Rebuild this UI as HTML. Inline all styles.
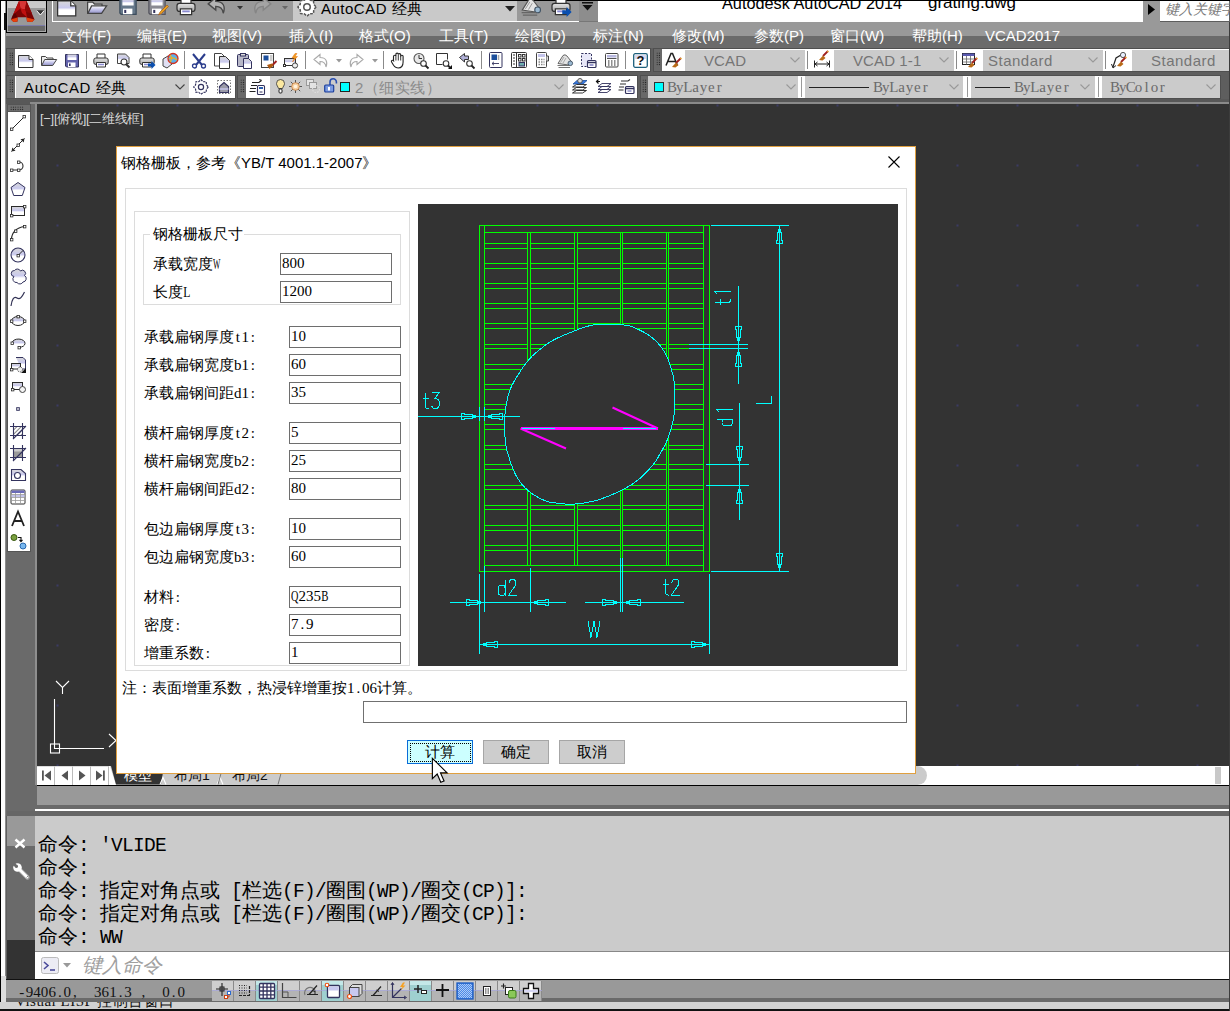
<!DOCTYPE html>
<html lang="zh">
<head>
<meta charset="utf-8">
<title>AutoCAD</title>
<style>
*{box-sizing:border-box;margin:0;padding:0}
html,body{width:1230px;height:1011px;overflow:hidden;background:#333}
body{position:relative;font-family:"Liberation Sans",sans-serif;font-size:15px;color:#000}
.a{position:absolute}
.t{position:absolute;white-space:nowrap;line-height:1}
.mono{font-family:"Liberation Mono",monospace}
.serif{font-family:"Liberation Serif",serif}
svg{position:absolute;overflow:visible}
/* ---------- frame ---------- */
#frame{left:0;top:0;width:1230px;height:1011px;background:#5e5e5e}
#ledge0{left:0;top:0;width:1px;height:1011px;background:#000}
#ledge1{left:1px;top:1px;width:4px;height:1002px;background:#fdfdfd}
#ledge2{left:5px;top:1px;width:1px;height:1002px;background:#8c8c8c}
#tedge{left:0;top:0;width:1230px;height:1px;background:#000}
#redge{left:1229px;top:22px;width:1px;height:989px;background:#3c3c3c}
/* ---------- title ---------- */
#appbtn{left:6px;top:0;width:41px;height:33px;border:1px solid #000;background:linear-gradient(#c9c9c9 0,#c9c9c9 7px,#999 7px,#999 24px,#7c7ca8 24px,#7c7ca8 25px,#6a6a6a 25px)}
#qatgap{left:47px;top:1px;width:5px;height:21px;background:#999}
#qat{left:52px;top:1px;width:527px;height:21px;background:#999;border-left:1px solid #fff;border-bottom:1px solid #fff}
#qatcombo{left:293px;top:1px;width:224px;height:20px;background:#c9c9c9}
#qatdrop{left:579px;top:1px;width:19px;height:21px;background:#8d8d8d;border-bottom:1px solid #777}
#titlebar{left:598px;top:1px;width:545px;height:21px;background:#fff}
#srchbtn{left:1143px;top:1px;width:17px;height:21px;background:#999}
#srch{left:1160px;top:1px;width:69px;height:20px;background:#fff}
/* ---------- menu ---------- */
#menubar{left:6px;top:22px;width:1223px;height:26px;background:linear-gradient(#999 0,#999 14px,#6b6b6b 14px,#6b6b6b 100%)}
.mi{position:absolute;top:27px;color:#fff;font-size:15px;line-height:17px;white-space:nowrap}
/* ---------- toolbars ---------- */
.tb{position:absolute;background:#696969;border:1px solid #4f4f4f}
.tbw{position:absolute;background:#fff}
.cmb{position:absolute;background:#cbcbcb}
.grip{position:absolute;width:4.6px;background-image:radial-gradient(circle,#1a1a1a 0.5px,transparent 0.8px);background-size:2.3px 2.3px}
</style>
</head>
<body>
<div id="frame" class="a"></div>
<div id="tedge" class="a"></div>
<div id="ledge0" class="a"></div>
<div id="ledge1" class="a"></div>
<div id="ledge2" class="a"></div>

<!-- TITLE ROW -->
<div id="qatgap" class="a"></div>
<div id="qat" class="a"></div>
<div id="qatcombo" class="a"></div>
<div id="qatdrop" class="a"></div>
<div id="titlebar" class="a"></div>
<div id="srchbtn" class="a"></div>
<div id="srch" class="a"></div>
<!-- MENU -->
<div id="menubar" class="a"></div>
<div id="appbtn" class="a"></div>
<div class="mi" style="left:62px">文件(F)</div>
<div class="mi" style="left:137px">编辑(E)</div>
<div class="mi" style="left:212px">视图(V)</div>
<div class="mi" style="left:289px">插入(I)</div>
<div class="mi" style="left:359px">格式(O)</div>
<div class="mi" style="left:439px">工具(T)</div>
<div class="mi" style="left:515px">绘图(D)</div>
<div class="mi" style="left:593px">标注(N)</div>
<div class="mi" style="left:672px">修改(M)</div>
<div class="mi" style="left:754px">参数(P)</div>
<div class="mi" style="left:830px">窗口(W)</div>
<div class="mi" style="left:912px">帮助(H)</div>
<div class="mi" style="left:985px">VCAD2017</div>
<div class="t" id="ttl" style="left:722px;top:-5.500px;font-size:16.300px;line-height:17px">Autodesk AutoCAD 2014</div>
<div class="t" id="ttl2" style="left:928px;top:-6px;font-size:17px;line-height:17px">grating.dwg</div>
<div class="t" style="left:321px;top:0px;font-size:15px;line-height:17px;letter-spacing:.5px" id="qattxt">AutoCAD <span style="letter-spacing:0">经典</span></div>
<div class="t" style="left:1165px;top:2px;font-size:14px;line-height:14px;font-style:italic;color:#7a7a7a" id="srchtxt">键入关键字</div>
<svg style="left:1147px;top:4px" width="9" height="11"><path d="M1 0 L8 5.5 L1 11Z" fill="#000"/></svg>
<svg style="left:505px;top:6px" width="10" height="6"><path d="M0 0H10L5 5.5Z" fill="#222"/></svg>
<svg style="left:582px;top:2px" width="12" height="9"><path d="M0 0H11V1.6H0Z M0.5 3H10.5L5.5 8.5Z" fill="#111"/></svg>
<svg style="left:6px;top:0" width="41" height="33" viewBox="0 0 41 33">
<rect x="1.500" y="1.500" width="38" height="30" fill="none" stroke="#c4c4c4" stroke-width="1" opacity=".7"/>
<path d="M13 1L20.500 1L28.500 19.500L26 22L21 21.500L20.500 17.200L11.500 17.200L11.500 21.500L7.500 22L5 19.500Z" fill="#7a0404"/>
<path d="M13 1L20.500 1L19 9.500L14.500 8.500Z" fill="#d63636"/>
<path d="M13 1L14.500 8.500L9 13L7 15Z" fill="#b80d0d"/>
<path d="M20.500 1L26 13.500L20 12L19 9.500Z" fill="#8e0606"/>
<path d="M14.500 8.500L19 9.500L20 12L21 17.200L16 13Z" fill="#c01010"/>
<path d="M5 19.500L7 15L9 13L11.500 17.200L6 18Z" fill="#5a0202"/>
<path d="M5 19.500L11.500 17.500L11.500 21.500L7.500 22Z" fill="#e8420c"/>
<path d="M20.500 17.500L28.500 19.500L26 22L21 21.500Z" fill="#e8420c"/>
<path d="M30.800 10.200H38L34.400 14.400Z" fill="#333"/><path d="M30.800 10.800L34.400 15L38 10.800" fill="none" stroke="#fff" stroke-width=".9"/>
</svg>
<div class="a" style="left:4px;top:13px;width:1.500px;height:17px;background:#111"></div>
<!--MENUITEMS-->
<svg width="0" height="0" style="left:0;top:0"><defs>
<linearGradient id="gp" x1="0" y1="0" x2="0" y2="1"><stop offset="0" stop-color="#d8d8d8"/><stop offset=".45" stop-color="#c9c9ee"/><stop offset=".6" stop-color="#fff"/><stop offset="1" stop-color="#fff"/></linearGradient>
<linearGradient id="gf" x1="0" y1="0" x2="0" y2="1"><stop offset="0" stop-color="#fff"/><stop offset=".5" stop-color="#c4c4ea"/><stop offset="1" stop-color="#8f8fc4"/></linearGradient>
<linearGradient id="gg" x1="0" y1="0" x2="0" y2="1"><stop offset="0" stop-color="#e4e4e4"/><stop offset="1" stop-color="#a8a8a8"/></linearGradient>
</defs></svg>
<div class="tb" style="left:6px;top:48px;width:645px;height:24px"></div>
<div class="tbw" style="left:15px;top:49px;width:635px;height:22px"></div>
<div class="grip" style="left:8.5px;top:52px;height:14px"></div>
<div class="tb" style="left:653px;top:48px;width:577px;height:24px"></div>
<div class="tbw" style="left:662px;top:49px;width:567px;height:22px"></div>
<div class="grip" style="left:655.5px;top:52px;height:14px"></div>
<div class="tb" style="left:6px;top:75px;width:230px;height:24px"></div>
<div class="tbw" style="left:189px;top:76px;width:46px;height:22px"></div>
<div class="cmb" style="left:15px;top:76px;width:174px;height:22px;border-left:1px solid #fff"></div>
<div class="grip" style="left:8.5px;top:79px;height:14px"></div>
<div class="tb" style="left:237px;top:75px;width:401px;height:24px"></div>
<div class="tbw" style="left:246px;top:76px;width:391px;height:22px"></div>
<div class="cmb" style="left:270px;top:76px;width:298px;height:22px"></div>
<div class="grip" style="left:240px;top:79px;height:14px"></div>
<div class="tb" style="left:640px;top:75px;width:581px;height:24px"></div>
<div class="tbw" style="left:648px;top:76px;width:572px;height:22px"></div>
<div class="grip" style="left:642px;top:79px;height:14px"></div>
<div class="cmb" style="left:648px;top:76px;width:150px;height:22px"></div>
<div class="cmb" style="left:805px;top:76px;width:158px;height:22px"></div>
<div class="cmb" style="left:971px;top:76px;width:124px;height:22px"></div>
<div class="cmb" style="left:1102px;top:76px;width:118px;height:22px"></div>
<div class="a" style="left:800.5px;top:77px;width:1.5px;height:20px;background:#9a9a9a"></div>
<div class="a" style="left:966.5px;top:77px;width:1.5px;height:20px;background:#9a9a9a"></div>
<div class="a" style="left:1097.5px;top:77px;width:1.5px;height:20px;background:#9a9a9a"></div>
<div class="cmb" style="left:685px;top:50px;width:120px;height:21px"></div>
<div class="cmb" style="left:834px;top:50px;width:120px;height:21px"></div>
<div class="cmb" style="left:983px;top:50px;width:120px;height:21px"></div>
<div class="cmb" style="left:1132px;top:50px;width:97px;height:21px"></div>
<div class="a" style="left:86px;top:51px;width:1px;height:18px;background:#8a8a8a"></div>
<div class="a" style="left:184px;top:51px;width:1px;height:18px;background:#8a8a8a"></div>
<div class="a" style="left:305px;top:51px;width:1px;height:18px;background:#8a8a8a"></div>
<div class="a" style="left:383px;top:51px;width:1px;height:18px;background:#8a8a8a"></div>
<div class="a" style="left:481px;top:51px;width:1px;height:18px;background:#8a8a8a"></div>
<div class="a" style="left:625px;top:51px;width:1px;height:18px;background:#8a8a8a"></div>
<div class="a" style="left:807px;top:51px;width:1px;height:18px;background:#8a8a8a"></div>
<div class="a" style="left:956px;top:51px;width:1px;height:18px;background:#8a8a8a"></div>
<div class="a" style="left:1105px;top:51px;width:1px;height:18px;background:#8a8a8a"></div>
<svg style="left:175px;top:84px" width="10" height="6" viewBox="0 0 10 6" ><path d="M0.5 0.5 L5 5 L9.5 0.5" fill="none" stroke="#444" stroke-width="1.1"/></svg>
<svg style="left:554px;top:84px" width="10" height="6" viewBox="0 0 10 6" ><path d="M0.5 0.5 L5 5 L9.5 0.5" fill="none" stroke="#999" stroke-width="1.1"/></svg>
<svg style="left:790px;top:57px" width="10" height="6" viewBox="0 0 10 6" ><path d="M0.5 0.5 L5 5 L9.5 0.5" fill="none" stroke="#999" stroke-width="1.1"/></svg>
<svg style="left:939px;top:57px" width="10" height="6" viewBox="0 0 10 6" ><path d="M0.5 0.5 L5 5 L9.5 0.5" fill="none" stroke="#999" stroke-width="1.1"/></svg>
<svg style="left:1088px;top:57px" width="10" height="6" viewBox="0 0 10 6" ><path d="M0.5 0.5 L5 5 L9.5 0.5" fill="none" stroke="#999" stroke-width="1.1"/></svg>
<svg style="left:786px;top:84px" width="10" height="6" viewBox="0 0 10 6" ><path d="M0.5 0.5 L5 5 L9.5 0.5" fill="none" stroke="#999" stroke-width="1.1"/></svg>
<svg style="left:949px;top:84px" width="10" height="6" viewBox="0 0 10 6" ><path d="M0.5 0.5 L5 5 L9.5 0.5" fill="none" stroke="#999" stroke-width="1.1"/></svg>
<svg style="left:1080px;top:84px" width="10" height="6" viewBox="0 0 10 6" ><path d="M0.5 0.5 L5 5 L9.5 0.5" fill="none" stroke="#999" stroke-width="1.1"/></svg>
<svg style="left:1206px;top:84px" width="10" height="6" viewBox="0 0 10 6" ><path d="M0.5 0.5 L5 5 L9.5 0.5" fill="none" stroke="#999" stroke-width="1.1"/></svg>
<div class="t" style="left:24px;top:79px;font-size:15px;line-height:17px;letter-spacing:.64px">AutoCAD <span style="letter-spacing:0">经典</span></div>
<div class="t" style="left:355px;top:79px;font-size:15px;line-height:17px;color:#8a8a8a;letter-spacing:.5px">2（细实线）</div>
<div class="t" style="left:704px;top:52px;font-size:15px;line-height:17px;color:#757575;letter-spacing:0.1px">VCAD</div>
<div class="t" style="left:853px;top:52px;font-size:15px;line-height:17px;color:#757575;letter-spacing:0.1px">VCAD 1-1</div>
<div class="t" style="left:988px;top:52px;font-size:15px;line-height:17px;color:#757575;letter-spacing:0.5px">Standard</div>
<div class="t" style="left:1151px;top:52px;font-size:15px;line-height:17px;color:#757575;letter-spacing:0.5px">Standard</div>
<div class="t serif" style="left:668px;top:79px;font-size:15px;line-height:16px;color:#6a6a6a"><i style="font-style:normal;display:inline-flex;justify-content:center;width:7.900px">B</i><i style="font-style:normal;display:inline-flex;justify-content:center;width:7.900px">y</i><i style="font-style:normal;display:inline-flex;justify-content:center;width:7.900px">L</i><i style="font-style:normal;display:inline-flex;justify-content:center;width:7.900px">a</i><i style="font-style:normal;display:inline-flex;justify-content:center;width:7.900px">y</i><i style="font-style:normal;display:inline-flex;justify-content:center;width:7.900px">e</i><i style="font-style:normal;display:inline-flex;justify-content:center;width:7.900px">r</i></div>
<div class="t serif" style="left:874px;top:79px;font-size:15px;line-height:16px;color:#6a6a6a"><i style="font-style:normal;display:inline-flex;justify-content:center;width:7.900px">B</i><i style="font-style:normal;display:inline-flex;justify-content:center;width:7.900px">y</i><i style="font-style:normal;display:inline-flex;justify-content:center;width:7.900px">L</i><i style="font-style:normal;display:inline-flex;justify-content:center;width:7.900px">a</i><i style="font-style:normal;display:inline-flex;justify-content:center;width:7.900px">y</i><i style="font-style:normal;display:inline-flex;justify-content:center;width:7.900px">e</i><i style="font-style:normal;display:inline-flex;justify-content:center;width:7.900px">r</i></div>
<div class="t serif" style="left:1015px;top:79px;font-size:15px;line-height:16px;color:#6a6a6a"><i style="font-style:normal;display:inline-flex;justify-content:center;width:7.900px">B</i><i style="font-style:normal;display:inline-flex;justify-content:center;width:7.900px">y</i><i style="font-style:normal;display:inline-flex;justify-content:center;width:7.900px">L</i><i style="font-style:normal;display:inline-flex;justify-content:center;width:7.900px">a</i><i style="font-style:normal;display:inline-flex;justify-content:center;width:7.900px">y</i><i style="font-style:normal;display:inline-flex;justify-content:center;width:7.900px">e</i><i style="font-style:normal;display:inline-flex;justify-content:center;width:7.900px">r</i></div>
<div class="t serif" style="left:1111px;top:79px;font-size:15px;line-height:16px;color:#6a6a6a"><i style="font-style:normal;display:inline-flex;justify-content:center;width:7.900px">B</i><i style="font-style:normal;display:inline-flex;justify-content:center;width:7.900px">y</i><i style="font-style:normal;display:inline-flex;justify-content:center;width:7.900px">C</i><i style="font-style:normal;display:inline-flex;justify-content:center;width:7.900px">o</i><i style="font-style:normal;display:inline-flex;justify-content:center;width:7.900px">l</i><i style="font-style:normal;display:inline-flex;justify-content:center;width:7.900px">o</i><i style="font-style:normal;display:inline-flex;justify-content:center;width:7.900px">r</i></div>
<div class="a" style="left:809px;top:87px;width:60px;height:1.3px;background:#222"></div>
<div class="a" style="left:975px;top:87px;width:35px;height:1.3px;background:#222"></div>
<div class="a" style="left:654px;top:82px;width:10px;height:10px;background:#00ffff;border:1px solid #333"></div>
<div class="a" style="left:340px;top:82px;width:10px;height:10px;background:#00ffff;border:1px solid #222"></div>
<svg style="left:18px;top:54px" width="16" height="14" viewBox="0 0 16 14" ><path d="M0.5 1.5h10.5l4 4v8h-14.5z" fill="url(#gp)" stroke="#333" stroke-width="1"/><path d="M11 1.5v4h4" fill="#fff" stroke="#333" stroke-width="1"/></svg>
<svg style="left:41px;top:54px" width="16" height="14" viewBox="0 0 16 14" ><path d="M0.5 11.5v-9h4l1.5 1.5h6v2" fill="#eee" stroke="#444"/><path d="M0.7 11.5l3-6h12l-4 6z" fill="url(#gf)" stroke="#444"/></svg>
<svg style="left:64px;top:54px" width="16" height="14" viewBox="0 0 16 14" ><path d="M1.5 0.5h13v12.5h-12l-1-1z" fill="#6363ac" stroke="#33335e"/><rect x="3.5" y="0.5" width="9" height="5.5" fill="url(#gp)"/><rect x="4" y="8.5" width="7.5" height="4.5" fill="#fff"/><rect x="5" y="9.5" width="1.6" height="2.5" fill="#33335e"/></svg>
<svg style="left:93px;top:53px" width="17" height="16" viewBox="0 0 17 16" ><path d="M4 5V1h8v4" fill="#fff" stroke="#333"/><rect x="0.8" y="5" width="14.4" height="6.5" rx="2" fill="url(#gg)" stroke="#333"/><path d="M3.5 9.5h9v4.5h-9z" fill="#fff" stroke="#333"/><path d="M5 11.5h6" stroke="#8a8ad0" stroke-width="1.5"/></svg>
<svg style="left:116px;top:53px" width="16" height="16" viewBox="0 0 16 16" ><path d="M1.5 1h8l3.5 3.5v6h-11.5z" fill="url(#gp)" stroke="#444"/><circle cx="8" cy="9" r="3" fill="#fff" stroke="#333" stroke-width="1.2"/><path d="M10.2 11.2l3.3 3.3" stroke="#333" stroke-width="2"/></svg>
<svg style="left:139px;top:53px" width="17" height="16" viewBox="0 0 17 16" ><path d="M4 5V1h8v4" fill="#fff" stroke="#333"/><rect x="0.8" y="5" width="14.4" height="6.5" rx="2" fill="url(#gg)" stroke="#333"/><path d="M3.5 9.5h9v4.5h-9z" fill="#fff" stroke="#333"/><path d="M5 11.5h6" stroke="#8a8ad0" stroke-width="1.5"/><path d="M9 10.5h3.5v-2.5l4 4-4 4v-2.5h-3.5z" fill="#0a4fb0"/></svg>
<svg style="left:162px;top:53px" width="17" height="16" viewBox="0 0 17 16" ><path d="M1 6l5-3 4 1v7l-5 4-4-2z" fill="#e0e0f4" stroke="#444"/><circle cx="11" cy="5.5" r="5" fill="#5db0e8" stroke="#d03020" stroke-width="1.3"/><path d="M8 2c2 2 2 5 0 7M7 6c3-2 6-1 8 1" stroke="#f0b020" stroke-width="1.2" fill="none"/></svg>
<svg style="left:191px;top:53px" width="16" height="16" viewBox="0 0 16 16" ><path d="M2 1l9 11M14 1l-9 11" stroke="#2a3c8c" stroke-width="2"/><circle cx="3.5" cy="13" r="2" fill="#fff" stroke="#2a3c8c" stroke-width="1.3"/><circle cx="12.5" cy="13" r="2" fill="#fff" stroke="#2a3c8c" stroke-width="1.3"/></svg>
<svg style="left:214px;top:53px" width="16" height="16" viewBox="0 0 16 16" ><path d="M0.5 0.5h7l2.5 2.5v10h-9.5z" fill="#fff" stroke="#444"/><path d="M5.5 3.5h6l4 4v8h-10z" fill="url(#gp)" stroke="#333"/></svg>
<svg style="left:237px;top:53px" width="16" height="16" viewBox="0 0 16 16" ><rect x="0.5" y="1.5" width="11" height="12" rx="1" fill="#b8b8c8" stroke="#33335e"/><rect x="3.5" y="0.5" width="5" height="2.5" fill="#ddd" stroke="#33335e"/><path d="M6.5 5.5h5l3 3v7h-8z" fill="url(#gp)" stroke="#33335e"/></svg>
<svg style="left:261px;top:53px" width="17" height="16" viewBox="0 0 17 16" ><rect x="0.5" y="0.5" width="12" height="14" fill="#fff" stroke="#444"/><rect x="2.5" y="2.5" width="5" height="5" fill="#1c4f9c"/><path d="M9 3h2.5M9 5h2.5M9 7h2.5" stroke="#999"/><path d="M15.5 8l-5 5" stroke="#a02020" stroke-width="2"/><path d="M6 12l5-1.5 1.5 2-4 3.5z" fill="#b05a10"/></svg>
<svg style="left:283px;top:53px" width="17" height="16" viewBox="0 0 17 16" ><rect x="1.5" y="5.5" width="11" height="7" fill="url(#gp)" stroke="#333"/><circle cx="12" cy="12.5" r="2.6" fill="#eee" stroke="#444"/><rect x="0.5" y="11.5" width="2" height="2" fill="#fff" stroke="#333"/><path d="M12 0.5l-3 4.5h2.5l-2 4 5-5.5h-2.5l2-3z" fill="#f7a020" stroke="#e07010" stroke-width=".5"/></svg>
<svg style="left:313px;top:54px" width="16" height="14" viewBox="0 0 16 14" ><path d="M1 5.5l6-5v3c6 0 8 4 6 9.5c-.5-4-3-5.5-6-5.5v3z" fill="#fff" stroke="#aaa" stroke-width="1.1"/></svg>
<svg style="left:336px;top:59px" width="6" height="4" viewBox="0 0 6 4" ><path d="M0 0h6l-3 3.5z" fill="#999"/></svg>
<svg style="left:348px;top:54px" width="16" height="14" viewBox="0 0 16 14" ><path d="M15 5.5l-6-5v3c-6 0-8 4-6 9.5c.5-4 3-5.5 6-5.5v3z" fill="#fff" stroke="#aaa" stroke-width="1.1"/></svg>
<svg style="left:372px;top:59px" width="6" height="4" viewBox="0 0 6 4" ><path d="M0 0h6l-3 3.5z" fill="#999"/></svg>
<svg style="left:390px;top:52px" width="16" height="17" viewBox="0 0 16 17" ><path d="M3.5 9V4.5a1.2 1.2 0 012.4 0V2.3a1.2 1.2 0 012.4 0V2.8a1.2 1.2 0 012.4 0V4.5a1.2 1.2 0 012.4 0V10c0 4-2 6-5 6s-4-1.500-6.500-6c-.8-1.500 1-2.500 2-1z" fill="#fff" stroke="#222" stroke-width="1.1"/><path d="M5.900 4.500v4M8.300 3v5.500M10.700 4v4.500" stroke="#222" stroke-width=".9"/></svg>
<svg style="left:413px;top:53px" width="16" height="16" viewBox="0 0 16 16" ><circle cx="6" cy="5.500" r="5" fill="#e8e8e8" stroke="#555" stroke-width="1.1"/><path d="M6 2v3.500h3" stroke="#333" fill="none"/><circle cx="10.500" cy="10.500" r="2.800" fill="#fff" stroke="#333" stroke-width="1.1"/><path d="M12.500 12.500l3 3" stroke="#222" stroke-width="1.800"/></svg>
<svg style="left:436px;top:53px" width="16" height="16" viewBox="0 0 16 16" ><path d="M0.500 11.500v-11h11v6" fill="#fff" stroke="#333"/><path d="M0.500 11.500h6" stroke="#333"/><circle cx="10" cy="10.500" r="2.800" fill="#fff" stroke="#333" stroke-width="1.100"/><path d="M12 12.500l2 2" stroke="#222" stroke-width="1.800"/><path d="M16 12v4h-4z" fill="#111"/></svg>
<svg style="left:459px;top:53px" width="16" height="16" viewBox="0 0 16 16" ><path d="M0.500 4.500l5-4v2.500h4v3.500h-4v2.500z" fill="#b0b0d8" stroke="#333"/><circle cx="10.500" cy="10.500" r="2.800" fill="#fff" stroke="#333" stroke-width="1.100"/><path d="M12.500 12.500l3 3" stroke="#222" stroke-width="1.800"/></svg>
<svg style="left:489px;top:52px" width="14" height="16" viewBox="0 0 14 16" ><rect x="0.500" y="0.500" width="12.500" height="15" rx="1" fill="#fff" stroke="#33335e"/><rect x="2.500" y="2.500" width="5.500" height="5.500" fill="#1c4f9c"/><path d="M9.500 3v5" stroke="#aaa" stroke-width="1.500"/><path d="M3 11.500h7M5 9.800l-2 1.700 2 1.700" stroke="#33335e" fill="none" stroke-width=".9"/></svg>
<svg style="left:511px;top:52px" width="16" height="16" viewBox="0 0 16 16" ><rect x="0.500" y="0.500" width="15" height="15" rx="1" fill="#fff" stroke="#333"/><path d="M5.500 .5v15" stroke="#333"/><path d="M2 3h2M2 6h2M2 9h2M2 12h2" stroke="#333" stroke-width="1.200"/><rect x="7.500" y="2.500" width="2.500" height="2.500" fill="none" stroke="#333"/><rect x="11.500" y="2.500" width="2.500" height="2.500" fill="none" stroke="#333"/><rect x="7.500" y="6.500" width="2.500" height="2.500" fill="none" stroke="#333"/><rect x="11.500" y="6.500" width="2.500" height="2.500" fill="none" stroke="#333"/><rect x="8" y="10.500" width="5.500" height="3.500" fill="#6fb0b0" stroke="#33335e"/></svg>
<svg style="left:536px;top:52px" width="13" height="16" viewBox="0 0 13 16" ><rect x="0.500" y="0.500" width="10" height="15" rx="1" fill="#fff" stroke="#444"/><rect x="2" y="2" width="7" height="3" fill="#c4c4ea"/><path d="M2.500 7.500h1.500M5 7.500h1.500M7.500 7.500h1M2.500 10h1.500M5 10h1.500M7.500 10h1M2.500 12.500h1.500M5 12.500h1.500M7.500 12.500h1" stroke="#888" stroke-width="1.500"/><path d="M10.500 4h2v5h-2" fill="#ddd" stroke="#444"/></svg>
<svg style="left:557px;top:53px" width="17" height="15" viewBox="0 0 17 15" ><path d="M1 10.500L6 2.500Q8 .8 10 3L15 9.500L11.500 12Z" fill="#e4e4e4" stroke="#555" stroke-width=".9"/><path d="M3.500 9.500L7 4M6 10L9 5" stroke="#999" stroke-width=".8"/><circle cx="13.300" cy="10.300" r="2.300" fill="#9ab8d0" stroke="#456" stroke-width=".9"/><path d="M0.500 12.500h12M1.500 14.500h11.500" stroke="#666" stroke-width=".9"/></svg>
<svg style="left:580px;top:52px" width="17" height="17" viewBox="0 0 17 17" ><rect x="1.500" y="1.500" width="10" height="13" fill="#e8e8f8" stroke="#33335e" stroke-dasharray="2 1.500"/><rect x="7.500" y="8.500" width="8.500" height="7" rx="1" fill="#fff" stroke="#33335e" stroke-width="1.200"/><path d="M7.500 10.500h8.500" stroke="#33335e" stroke-width="1.500"/><path d="M9.500 13h4" stroke="#5a5ab0" stroke-width="1.200"/></svg>
<svg style="left:605px;top:52px" width="15" height="16" viewBox="0 0 15 16" ><rect x="0.500" y="1.500" width="12.500" height="13.500" rx="1" fill="#fff" stroke="#444"/><rect x="2" y="3" width="9.500" height="2.500" fill="#b8b8e0"/><path d="M2 6.500h9.500" stroke="#555"/><path d="M3 9h1.500M6 9h1.500M9 9h1.500M3 11h1.500M6 11h1.500M9 11h1.500M3 13h1.500M6 13h1.500M9 13h1.500" stroke="#222" stroke-width="1.200"/></svg>
<svg style="left:633px;top:53px" width="15" height="15" viewBox="0 0 15 15" ><rect x="0.700" y="0.700" width="13.600" height="13.600" rx="1.500" fill="#fff" stroke="#1c5f7c" stroke-width="1.300"/><rect x="2" y="2" width="11" height="4" fill="#d8d8f0"/></svg>
<div class="t" style="left:636.5px;top:53.5px;font-size:13px;font-weight:bold;line-height:14px;color:#111">?</div>
<svg style="left:57px;top:-1.5px;transform:scale(1.25);transform-origin:0 0" width="16" height="14" viewBox="0 0 16 14" ><path d="M0.5 1.5h10.5l4 4v8h-14.5z" fill="url(#gp)" stroke="#333" stroke-width="1"/><path d="M11 1.5v4h4" fill="#fff" stroke="#333" stroke-width="1"/></svg>
<svg style="left:87px;top:-1.5px;transform:scale(1.25);transform-origin:0 0" width="16" height="14" viewBox="0 0 16 14" ><path d="M0.5 11.5v-9h4l1.5 1.5h6v2" fill="#eee" stroke="#444"/><path d="M0.7 11.5l3-6h12l-4 6z" fill="url(#gf)" stroke="#444"/></svg>
<svg style="left:117.5px;top:-2px;transform:scale(1.25);transform-origin:0 0" width="16" height="14" viewBox="0 0 16 14" ><path d="M1.5 0.5h13v12.5h-12l-1-1z" fill="#66788a" stroke="#3c4c5c"/><rect x="3.5" y="0.5" width="9" height="5.5" fill="url(#gp)"/><rect x="4" y="8.5" width="7.5" height="4.5" fill="#fff"/><rect x="5" y="9.5" width="1.6" height="2.5" fill="#33335e"/></svg>
<svg style="left:147px;top:-2px;transform:scale(1.25);transform-origin:0 0" width="16" height="14" viewBox="0 0 16 14" ><path d="M1.5 0.5h13v12.5h-12l-1-1z" fill="#8a8a92" stroke="#55555f"/><rect x="3.5" y="0.5" width="9" height="5.5" fill="url(#gp)"/><rect x="4" y="8.5" width="7.5" height="4.5" fill="#fff"/><rect x="5" y="9.5" width="1.6" height="2.5" fill="#33335e"/></svg>
<svg style="left:176px;top:-3px;transform:scale(1.25);transform-origin:0 0" width="17" height="16" viewBox="0 0 17 16" ><path d="M4 5V1h8v4" fill="#fff" stroke="#333"/><rect x="0.8" y="5" width="14.4" height="6.5" rx="2" fill="url(#gg)" stroke="#333"/><path d="M3.5 9.5h9v4.5h-9z" fill="#fff" stroke="#333"/><path d="M5 11.5h6" stroke="#8a8ad0" stroke-width="1.5"/></svg>
<svg style="left:207px;top:-3px;transform:scale(1.25);transform-origin:0 0" width="16" height="14" viewBox="0 0 16 14" ><path d="M1 5.5l6-5v3c6 0 8 4 6 9.5c-.5-4-3-5.5-6-5.5v3z" fill="#b4b4b4" stroke="#4a4a4a" stroke-width="1.1"/></svg>
<svg style="left:236.5px;top:5.5px" width="6" height="4" viewBox="0 0 6 4" ><path d="M0 0h6l-3 3.5z" fill="#333"/></svg>
<svg style="left:252px;top:-3px;transform:scale(1.25);transform-origin:0 0" width="16" height="14" viewBox="0 0 16 14" ><path d="M15 5.5l-6-5v3c-6 0-8 4-6 9.5c.5-4 3-5.5 6-5.5v3z" fill="#a4a4a4" stroke="#858585" stroke-width="1.1"/></svg>
<svg style="left:281.5px;top:5.5px" width="6" height="4" viewBox="0 0 6 4" ><path d="M0 0h6l-3 3.5z" fill="#666"/></svg>
<svg style="left:521px;top:-3px;transform:scale(1.25);transform-origin:0 0" width="17" height="15" viewBox="0 0 17 15" ><path d="M1 10.500L6 2.500Q8 .8 10 3L15 9.500L11.500 12Z" fill="#e4e4e4" stroke="#555" stroke-width=".9"/><path d="M3.500 9.500L7 4M6 10L9 5" stroke="#999" stroke-width=".8"/><circle cx="13.300" cy="10.300" r="2.300" fill="#9ab8d0" stroke="#456" stroke-width=".9"/><path d="M0.500 12.500h12M1.500 14.500h11.500" stroke="#666" stroke-width=".9"/></svg>
<svg style="left:551px;top:-3px;transform:scale(1.25);transform-origin:0 0" width="17" height="16" viewBox="0 0 17 16" ><path d="M4 5V1h8v4" fill="#fff" stroke="#333"/><rect x="0.8" y="5" width="14.4" height="6.5" rx="2" fill="url(#gg)" stroke="#333"/><path d="M3.5 9.5h9v4.5h-9z" fill="#fff" stroke="#333"/><path d="M5 11.5h6" stroke="#8a8ad0" stroke-width="1.5"/><path d="M9 10.5h3.5v-2.5l4 4-4 4v-2.5h-3.5z" fill="#0a4fb0"/></svg>
<svg style="left:156px;top:5px" width="12" height="10" viewBox="0 0 12 10" ><path d="M11 0l-7 7-1.500 3 3-1.500 7-7z" fill="#e8a020" stroke="#a05010" stroke-width=".6"/></svg>
<svg style="left:297px;top:-3px" width="20" height="20" viewBox="0 0 20 20" ><g transform="scale(1.25)"><path d="M15.3 8.0 L13.4 10.2 L13.2 13.2 L10.2 13.4 L8.0 15.3 L5.8 13.4 L2.8 13.2 L2.6 10.2 L0.7 8.0 L2.6 5.8 L2.8 2.8 L5.8 2.6 L8.0 0.7 L10.2 2.6 L13.2 2.8 L13.4 5.8Z" fill="#fff" stroke="#555" stroke-width="1.200" stroke-linejoin="round" stroke-dasharray="2.200 1"/><circle cx="8" cy="8" r="2.600" fill="#fff" stroke="#555" stroke-width="1.200"/></g></svg>
<svg style="left:193px;top:79px" width="16" height="16" viewBox="0 0 16 16" ><g transform="scale(1.0)"><path d="M15.3 8.0 L13.4 10.2 L13.2 13.2 L10.2 13.4 L8.0 15.3 L5.8 13.4 L2.8 13.2 L2.6 10.2 L0.7 8.0 L2.6 5.8 L2.8 2.8 L5.8 2.6 L8.0 0.7 L10.2 2.6 L13.2 2.8 L13.4 5.8Z" fill="#fff" stroke="#33335e" stroke-width="1.200" stroke-linejoin="round" stroke-dasharray="2.200 1"/><circle cx="8" cy="8" r="2.600" fill="#fff" stroke="#33335e" stroke-width="1.200"/></g></svg>
<svg style="left:216px;top:79px" width="16" height="16" viewBox="0 0 16 16" ><rect x="1.500" y="1.500" width="13" height="13" fill="none" stroke="#777" stroke-dasharray="1.500 1.500"/><path d="M3.500 13.500v-6l4.500-4 4.500 4v6z" fill="#9a9aa8" stroke="#33335e" stroke-width="1.200"/><path d="M3.500 10h9" stroke="#c4c4ea" stroke-width="1.500"/></svg>
<svg style="left:249px;top:79px" width="17" height="17" viewBox="0 0 17 17" ><path d="M3 3.500h7l2-2M2 6.500h6M1 9.500h6M0.500 12.500h6" stroke="#222" stroke-width="1.100" fill="none"/><path d="M10 0.500l2.500 0.500-1 2" fill="none" stroke="#222" stroke-width=".8"/><rect x="8.500" y="6.500" width="7" height="9" rx="1" fill="#fff" stroke="#33335e" stroke-width="1.100"/><rect x="10" y="8" width="4" height="2" fill="#2a5fb0"/><path d="M10.500 13h3" stroke="#33335e"/></svg>
<svg style="left:276px;top:79px" width="9" height="15" viewBox="0 0 9 15" ><path d="M4.500 0.500a4 4 0 014 4c0 2-1.500 3-2 5h-4c-.5-2-2-3-2-5a4 4 0 014-4z" fill="#fbe8a0" stroke="#444" stroke-width=".9"/><rect x="3" y="10" width="3" height="4" rx="1" fill="#fff" stroke="#222"/></svg>
<svg style="left:289px;top:80px" width="13" height="13" viewBox="0 0 13 13" ><g stroke="#555" stroke-width="1"><path d="M6.500 0v13M0 6.500h13M1.800 1.800l9.400 9.400M11.200 1.800l-9.400 9.400"/></g><circle cx="6.500" cy="6.500" r="3.800" fill="#f7cfa0" stroke="#c88040" stroke-width=".8"/><circle cx="6.500" cy="6.500" r="1.800" fill="#fff4e0"/></svg>
<svg style="left:306px;top:79px" width="15" height="15" viewBox="0 0 15 15" ><rect x="0.500" y="0.500" width="7" height="6" fill="#e4e4e4" stroke="#999"/><rect x="3.500" y="3.500" width="7" height="6" fill="#e4e4e4" stroke="#999"/><circle cx="10" cy="10" r="3.500" fill="none" stroke="#ddd" stroke-dasharray="1.500 1.200" stroke-width="1.200"/></svg>
<svg style="left:324px;top:78px" width="14" height="15" viewBox="0 0 14 15" ><path d="M6 7V4a3.200 3.200 0 016.400 0v1.500" fill="none" stroke="#2a4fb0" stroke-width="1.600"/><rect x="0.700" y="7" width="9" height="7" rx="1" fill="#7a9ae0" stroke="#1c3f9c" stroke-width="1.200"/><rect x="4" y="9" width="2" height="3.500" fill="#fff"/></svg>
<svg style="left:572px;top:78px" width="17" height="17" viewBox="0 0 17 17" ><path d="M1 6l4-3.500h10l-4 3.500z" fill="#3a7ae0" stroke="#1c4f9c" stroke-width=".8"/><circle cx="8" cy="2.800" r="2.300" fill="#ddd" stroke="#555"/><path d="M0.500 9l4-2.500h10l-4 2.500zM0.500 12l4-2.500h10l-4 2.500zM0.500 15l4-2.500h10l-4 2.500z" fill="#fff" stroke="#222" stroke-width=".9"/></svg>
<svg style="left:595px;top:78px" width="17" height="17" viewBox="0 0 17 17" ><path d="M5 3.500h-3.500M3.500 1.500l-2 2 2 2" stroke="#111" fill="none" stroke-width="1.200"/><path d="M3 8.500l4-3h9l-4 3zM3 11.500l4-3h9l-4 3zM3 14.500l4-3h9l-4 3z" fill="#fff" stroke="#33335e" stroke-width=".9"/></svg>
<svg style="left:618px;top:78px" width="17" height="17" viewBox="0 0 17 17" ><path d="M3 3h7l2-1.500M2 6h6M1 9h5M0.500 12h5" stroke="#333" stroke-width="1.100" fill="none"/><rect x="7.500" y="8.500" width="8.500" height="7" rx="1" fill="#fff" stroke="#33335e" stroke-width="1.200"/><path d="M7.500 10.500h8.500" stroke="#33335e" stroke-width="1.500"/><path d="M9.500 13h4" stroke="#5a5ab0"/></svg>
<svg style="left:665px;top:52px" width="18" height="18" viewBox="0 0 18 18" ><path d="M1 13.500l5-12h1.500l5 12M3 9.500h7.500" fill="none" stroke="#222" stroke-width="1.500"/><path d="M16 6l-5 5" stroke="#a02020" stroke-width="1.800"/><path d="M7 15l4-4.500 2.500 2.500-3 2.500z" fill="#b86a18"/><path d="M15.5 6l1 1" stroke="#f0c040" stroke-width="1.500"/></svg>
<svg style="left:814px;top:52px" width="18" height="18" viewBox="0 0 18 18" ><path d="M0.500 8.500v7M15.500 8.500v7M1 12h14M3.500 10l-2.500 2 2.500 2M12.500 10l2.500 2-2.500 2" stroke="#222" stroke-width="1" fill="none"/><path d="M14 -1l-5 5" stroke="#a02020" stroke-width="1.800"/><path d="M5 8l4-4.500 2.500 2.500-3 2.500z" fill="#b86a18"/><path d="M13.5 -1l1 1" stroke="#f0c040" stroke-width="1.500"/></svg>
<svg style="left:962px;top:52px" width="18" height="18" viewBox="0 0 18 18" ><rect x="0.500" y="1.500" width="12" height="11" fill="#fff" stroke="#222"/><rect x="0.500" y="1.500" width="12" height="2.500" fill="#5a5ab0"/><path d="M0.500 7h12M0.500 10h12M4.500 4v8.500M8.500 4v8.500" stroke="#666" stroke-width=".8"/><path d="M15 6l-5 5" stroke="#a02020" stroke-width="1.800"/><path d="M6 15l4-4.500 2.500 2.500-3 2.500z" fill="#b86a18"/><path d="M14.5 6l1 1" stroke="#f0c040" stroke-width="1.500"/></svg>
<svg style="left:1111px;top:52px" width="18" height="18" viewBox="0 0 18 18" ><path d="M2 15l3-9 5-3" fill="none" stroke="#222" stroke-width="1.200"/><path d="M0.500 12l1.500 4 3-2.500" fill="none" stroke="#222"/><circle cx="12" cy="3" r="2.600" fill="#e8f0ff" stroke="#555"/><path d="M15 5l-5 5" stroke="#a02020" stroke-width="1.800"/><path d="M6 14l4-4.500 2.500 2.500-3 2.500z" fill="#b86a18"/><path d="M14.5 5l1 1" stroke="#f0c040" stroke-width="1.500"/></svg>

<div class="a" style="left:6px;top:99px;width:1223px;height:5px;background:#585858"></div>
<div class="a" style="left:30px;top:102px;width:1199px;height:2px;background:#8a8a8a"></div>
<div class="a" style="left:6px;top:104px;width:31px;height:712px;background:#6a6a6a"></div>
<div class="a" style="left:34.5px;top:104px;width:2px;height:681px;background:#8f8f8f"></div>
<div class="a" style="left:37px;top:104px;width:1192px;height:663px;background:#333 radial-gradient(circle,#3e3e78 0.6px,transparent 1px) -9.500px -28.500px/60px 60px"></div>
<div class="a" style="left:7px;top:104px;width:24px;height:448px;background:#fff;border:1px solid #555"></div>
<div class="a" style="left:7px;top:104px;width:24px;height:8px;background:#6e6e6e;border:1px solid #555"></div>
<div class="a" style="left:10px;top:106px;width:14px;height:5px;background-image:radial-gradient(circle,#1a1a1a 0.5px,transparent 0.8px);background-size:2.3px 2.3px"></div>
<div class="t" style="left:40px;top:112px;font-size:13px;line-height:14px;color:#d8d8d8;letter-spacing:-0.3px">[−][俯视][二维线框]</div>
<svg style="left:45px;top:675px" width="80" height="85" viewBox="0 0 80 85" ><g stroke="#fff" stroke-width="1.1" fill="none"><path d="M9.500 24v49.500h49.500"/><rect x="5.500" y="69" width="9" height="9"/><path d="M11 6l6.500 6.500 6.500-6.500M17.500 12.500v6.500"/><path d="M64 59l7 6.500-7 6.500"/></g></svg>
<svg style="left:10px;top:115px" width="16" height="16" viewBox="0 0 16 16" ><path d="M2 14L14 2" stroke="#2a2a2a"/><rect x="0.5" y="13" width="2.400" height="2.400" fill="#fff" stroke="#2a2a2a" stroke-width=".8"/><rect x="13" y="0.5" width="2.400" height="2.400" fill="#fff" stroke="#2a2a2a" stroke-width=".8"/></svg>
<svg style="left:10px;top:137px" width="16" height="16" viewBox="0 0 16 16" ><path d="M1.500 14.500L14.500 1.500" stroke="#2a2a2a"/><path d="M14.500 1.500l-4 .8 3.200 3.200zM1.500 14.500l4-.8-3.200-3.200z" fill="#2a2a2a"/><rect x="7" y="7" width="2.400" height="2.400" fill="#fff" stroke="#2a2a2a" stroke-width=".8"/></svg>
<svg style="left:10px;top:159px" width="16" height="16" viewBox="0 0 16 16" ><path d="M2 11h7a4 4 0 000-8h-1" fill="none" stroke="#2a2a2a" stroke-width="1.100"/><rect x="0.5" y="10" width="2.400" height="2.400" fill="#fff" stroke="#2a2a2a" stroke-width=".8"/><rect x="7.5" y="10" width="2.400" height="2.400" fill="#fff" stroke="#2a2a2a" stroke-width=".8"/><rect x="7.5" y="2" width="2.400" height="2.400" fill="#fff" stroke="#2a2a2a" stroke-width=".8"/></svg>
<svg style="left:10px;top:181px" width="16" height="16" viewBox="0 0 16 16" ><path d="M8 1.500l7 5-2.700 8h-8.600l-2.700-8z" fill="url(#gp)" stroke="#33335e"/></svg>
<svg style="left:10px;top:203px" width="16" height="16" viewBox="0 0 16 16" ><rect x="1.500" y="3.500" width="13" height="9" fill="url(#gp)" stroke="#2a2a2a"/><rect x="0.5" y="11.5" width="2.400" height="2.400" fill="#fff" stroke="#2a2a2a" stroke-width=".8"/><rect x="13.5" y="2.5" width="2.400" height="2.400" fill="#fff" stroke="#2a2a2a" stroke-width=".8"/></svg>
<svg style="left:10px;top:225px" width="16" height="16" viewBox="0 0 16 16" ><path d="M1.500 14.500c0-7 5-12 13-13" fill="none" stroke="#2a2a2a" stroke-width="1.100"/><rect x="0.5" y="13.5" width="2.400" height="2.400" fill="#fff" stroke="#2a2a2a" stroke-width=".8"/><rect x="4.5" y="5" width="2.400" height="2.400" fill="#fff" stroke="#2a2a2a" stroke-width=".8"/><rect x="13.5" y="0.5" width="2.400" height="2.400" fill="#fff" stroke="#2a2a2a" stroke-width=".8"/></svg>
<svg style="left:10px;top:247px" width="16" height="16" viewBox="0 0 16 16" ><circle cx="8" cy="8" r="7" fill="url(#gp)" stroke="#33335e" stroke-width="1.100"/><path d="M8 8.500l5-5" stroke="#2a2a2a"/><rect x="7" y="7.5" width="2.400" height="2.400" fill="#fff" stroke="#2a2a2a" stroke-width=".8"/></svg>
<svg style="left:10px;top:269px" width="16" height="16" viewBox="0 0 16 16" ><path d="M4 7.500a3 3 0 01.500-6 3.500 3.500 0 016 .5 3 3 0 014 4.500 3.500 3.500 0 01-1.500 6.500 3.500 3.500 0 01-6 .5 3.500 3.500 0 01-3-6z" fill="url(#gp)" stroke="#33335e"/></svg>
<svg style="left:10px;top:291px" width="16" height="16" viewBox="0 0 16 16" ><path d="M1 15c1-7 3-10 6-8s5-1 7.500-6" fill="none" stroke="#335" stroke-width="1.200"/></svg>
<svg style="left:10px;top:313px" width="16" height="16" viewBox="0 0 16 16" ><ellipse cx="8" cy="8" rx="6.500" ry="4.500" fill="url(#gp)" stroke="#2a2a2a"/><rect x="0.5" y="7" width="2.400" height="2.400" fill="#fff" stroke="#2a2a2a" stroke-width=".8"/><rect x="13.5" y="7" width="2.400" height="2.400" fill="#fff" stroke="#2a2a2a" stroke-width=".8"/><rect x="7" y="2.5" width="2.400" height="2.400" fill="#fff" stroke="#2a2a2a" stroke-width=".8"/></svg>
<svg style="left:10px;top:335px" width="16" height="16" viewBox="0 0 16 16" ><path d="M2 8a6.500 4.200 0 1113 .5a6.500 4.200 0 01-6 3.800" fill="url(#gp)" stroke="#2a2a2a"/><rect x="1" y="7" width="2.400" height="2.400" fill="#fff" stroke="#2a2a2a" stroke-width=".8"/><rect x="8" y="11.5" width="2.400" height="2.400" fill="#fff" stroke="#2a2a2a" stroke-width=".8"/></svg>
<svg style="left:10px;top:357px" width="16" height="16" viewBox="0 0 16 16" ><path d="M6 .5h7l2.500 2.500v9h-4" fill="url(#gp)" stroke="#33335e"/><rect x="1.500" y="6.500" width="9" height="5.500" fill="url(#gp)" stroke="#2a2a2a"/><circle cx="10" cy="12.500" r="2.500" fill="#eee" stroke="#555" stroke-dasharray="1.500 1"/><rect x="0.5" y="11.5" width="2.400" height="2.400" fill="#fff" stroke="#2a2a2a" stroke-width=".8"/><path d="M16 11v5h-5z" fill="#111"/></svg>
<svg style="left:10px;top:379px" width="16" height="16" viewBox="0 0 16 16" ><rect x="2.500" y="3.500" width="10" height="7" fill="url(#gp)" stroke="#2a2a2a"/><circle cx="12.500" cy="10.500" r="3" fill="#f4f4f4" stroke="#444"/><rect x="1.5" y="9.5" width="2.400" height="2.400" fill="#fff" stroke="#2a2a2a" stroke-width=".8"/></svg>
<svg style="left:10px;top:401px" width="16" height="16" viewBox="0 0 16 16" ><rect x="6.700" y="6.700" width="2.600" height="2.600" fill="#fff" stroke="#33335e" stroke-width="1"/></svg>
<svg style="left:10px;top:423px" width="16" height="16" viewBox="0 0 16 16" ><defs><pattern id="hp" width="3" height="3" patternUnits="userSpaceOnUse" patternTransform="rotate(-45)"><path d="M0 1.500h3" stroke="#666" stroke-width=".8"/></pattern></defs><rect x="3.500" y="3.500" width="9" height="9" fill="url(#hp)"/><path d="M3.500 0v16M12.500 0v16M0 3.500h16M0 12.500h16M3 16L16 3" stroke="#33335e" stroke-width="1.100"/></svg>
<svg style="left:10px;top:445px" width="16" height="16" viewBox="0 0 16 16" ><rect x="3.500" y="3.500" width="9" height="9" fill="#999"/><rect x="3.500" y="3.500" width="9" height="3" fill="#ccc"/><path d="M3.500 0v16M12.500 0v16M0 3.500h16M0 12.500h16M3 16L16 3" stroke="#33335e" stroke-width="1.100"/></svg>
<svg style="left:10px;top:467px" width="16" height="16" viewBox="0 0 16 16" ><path d="M1.500 2.500h9.500l4.500 4v7h-14z" fill="url(#gp)" stroke="#33335e" stroke-width="1.100"/><circle cx="7.500" cy="8.500" r="3" fill="#fff" stroke="#33335e" stroke-width="1.100"/></svg>
<svg style="left:10px;top:489px" width="16" height="16" viewBox="0 0 16 16" ><rect x="1" y="1" width="14" height="14" rx="1" fill="#fff" stroke="#333"/><rect x="1.500" y="1.500" width="13" height="2.500" fill="#6a6ab8"/><rect x="1.500" y="6" width="13" height="2" fill="#c4c4ea"/><path d="M1 5.500h14M1 8.500h14M1 11.500h14M5.500 4v11M10.500 4v11" stroke="#999" stroke-width=".8"/></svg>
<svg style="left:10px;top:511px" width="16" height="16" viewBox="0 0 16 16" ><path d="M2 15l6-14.500 6 14.500M4.200 10h7.600" fill="none" stroke="#222" stroke-width="1.800"/></svg>
<svg style="left:10px;top:533px" width="16" height="16" viewBox="0 0 16 16" ><circle cx="4" cy="4.500" r="3" fill="#7aa040" stroke="#3a5a10"/><circle cx="13" cy="13" r="3" fill="#78b8f0" stroke="#2a6ab0"/><path d="M8 4.500h3v3.500M9.500 6.800l1.500 1.800 1.500-1.800" stroke="#111" fill="none" stroke-width="1.100"/></svg>

<div class="a" style="left:37px;top:766px;width:1192px;height:19px;background:#fff"></div>
<div class="a" style="left:109px;top:766px;width:818px;height:19px;background:#cbcbcb;border-radius:0 10px 10px 0"></div>
<div class="a" style="left:1215px;top:767px;width:6px;height:17px;background:#c8c8c8"></div>
<div class="a" style="left:37px;top:766px;width:18px;height:19px;background:#fff;border-right:1px solid #bbb;border-top:1px solid #ddd"></div>
<div class="a" style="left:55px;top:766px;width:18px;height:19px;background:#fff;border-right:1px solid #bbb;border-top:1px solid #ddd"></div>
<div class="a" style="left:73px;top:766px;width:18px;height:19px;background:#fff;border-right:1px solid #bbb;border-top:1px solid #ddd"></div>
<div class="a" style="left:91px;top:766px;width:18px;height:19px;background:#fff;border-right:1px solid #bbb;border-top:1px solid #ddd"></div>
<svg style="left:37px;top:766px" width="72" height="19" viewBox="0 0 72 19" ><g fill="#555"><path d="M5 4.500h1.800v10h-1.800zM14 4.500v10l-6.500-5z"/><path d="M31 4.500v10l-6.500-5z"/><path d="M42 4.500v10l6.500-5z"/><path d="M59 4.500v10l6.500-5zM66 4.500h1.800v10h-1.800z"/></g></svg>
<svg style="left:109px;top:766px" width="180" height="19" viewBox="0 0 180 19" ><path d="M1 0l6 19h-7v-19z" fill="#fff"/><path d="M2 0h53l-3 18.500h-45z" fill="#333"/><path d="M51 18.500l3-7 3 7M108 18.500l3-7 3 7" stroke="#fff" fill="none" stroke-width="1.100"/><path d="M114 0l-5 18.500M174 0l-5 18.500" stroke="#777" fill="none"/></svg>
<div class="t" style="left:124px;top:768px;font-size:14px;line-height:15px;color:#fff">模型</div>
<div class="t" style="left:174px;top:768px;font-size:14px;line-height:15px;color:#111">布局1</div>
<div class="t" style="left:232px;top:768px;font-size:14px;line-height:15px;color:#111">布局2</div>
<div class="a" style="left:37px;top:785px;width:1192px;height:1px;background:#000"></div>
<div class="a" style="left:37px;top:786px;width:1192px;height:19px;background:#999"></div>
<div class="a" style="left:37px;top:805px;width:1192px;height:4px;background:#6a6a6a"></div>
<div class="a" style="left:35px;top:809px;width:1194px;height:2px;background:#fff"></div>
<div class="a" style="left:7px;top:811px;width:1222px;height:5px;background:#666"></div>
<div class="a" style="left:7px;top:816px;width:28px;height:164px;background:#6a6a6a"></div>
<div class="a" style="left:7px;top:816px;width:28px;height:30px;background:#999"></div>
<div class="a" style="left:7px;top:940px;width:28px;height:40px;background:#333"></div>
<div class="a" style="left:35px;top:816px;width:1194px;height:135px;background:#cbcbcb"></div>
<div class="a" style="left:35px;top:951px;width:1194px;height:28px;background:#fff;border-top:1px solid #888"></div>
<div class="a" style="left:6px;top:979px;width:1223px;height:1.500px;background:#111"></div>
<svg style="left:14px;top:838px" width="12" height="11" viewBox="0 0 12 11" ><path d="M1.500 1.500l9 8M10.500 1.500l-9 8" stroke="#fff" stroke-width="2.400"/></svg>
<svg style="left:10px;top:860px" width="22" height="22" viewBox="0 0 22 22" ><path d="M10.500 10.500l7 7" stroke="#9a9a9a" stroke-width="4.600" stroke-linecap="round"/><path d="M10 10l7 7" stroke="#fff" stroke-width="3" stroke-linecap="round"/><circle cx="7.500" cy="7.500" r="4.300" fill="#fff"/><path d="M7.500 7.500L1 4.500L4.500 1Z" fill="#6a6a6a"/><circle cx="6.300" cy="6.300" r="1.700" fill="#6a6a6a"/><path d="M16.500 17.500l1.500-1.500" stroke="#888" stroke-width="1"/></svg>
<div class="t mono" style="left:38px;top:836px;font-size:19.5px;line-height:21px;color:#000;letter-spacing:-0.7px"><span style="letter-spacing:0">命令</span>: 'VLIDE</div>
<div class="t mono" style="left:38px;top:859px;font-size:19.5px;line-height:21px;color:#000;letter-spacing:-0.7px"><span style="letter-spacing:0">命令</span>:</div>
<div class="t mono" style="left:38px;top:882px;font-size:19.5px;line-height:21px;color:#000;letter-spacing:-0.7px"><span style="letter-spacing:0">命令</span>: <span style="letter-spacing:0">指定对角点或</span> [<span style="letter-spacing:0">栏选</span>(F)/<span style="letter-spacing:0">圈围</span>(WP)/<span style="letter-spacing:0">圈交</span>(CP)]:</div>
<div class="t mono" style="left:38px;top:905px;font-size:19.5px;line-height:21px;color:#000;letter-spacing:-0.7px"><span style="letter-spacing:0">命令</span>: <span style="letter-spacing:0">指定对角点或</span> [<span style="letter-spacing:0">栏选</span>(F)/<span style="letter-spacing:0">圈围</span>(WP)/<span style="letter-spacing:0">圈交</span>(CP)]:</div>
<div class="t mono" style="left:38px;top:928px;font-size:19.5px;line-height:21px;color:#000;letter-spacing:-0.7px"><span style="letter-spacing:0">命令</span>: WW</div>
<svg style="left:41px;top:957px" width="18" height="17" viewBox="0 0 18 17" ><rect x="0.500" y="0.500" width="17" height="16" rx="2" fill="#ececf4" stroke="#bbb"/><path d="M3 5l4 3.500-4 3.500" fill="none" stroke="#4a4a9a" stroke-width="1.600"/><path d="M9 13h5" stroke="#4a4a9a" stroke-width="1.600"/></svg>
<svg style="left:63px;top:963px" width="8" height="5" viewBox="0 0 8 5" ><path d="M0 0h8l-4 4.500z" fill="#999"/></svg>
<div class="t" style="left:82px;top:954px;font-size:20px;line-height:22px;color:#a0a0a0;font-style:italic">键入命令</div>
<div class="a" style="left:1px;top:976px;width:5px;height:27px;background:#dcdcdc"></div>
<div class="a" style="left:6px;top:980px;width:1223px;height:19px;background:#999"></div>
<div class="a" style="left:6px;top:998px;width:1223px;height:4px;background:#6a6a6a"></div>
<div class="a" style="left:0px;top:1002px;width:1230px;height:8px;background:#d2d2d2"></div>
<div class="a" style="left:0px;top:1009px;width:1230px;height:2px;background:#111"></div>
<div class="t serif" style="left:18px;top:984px;font-size:15px;line-height:16px;color:#111"><i style="font-style:normal;display:inline-flex;justify-content:center;width:7.600px">-</i><i style="font-style:normal;display:inline-flex;justify-content:center;width:7.600px">9</i><i style="font-style:normal;display:inline-flex;justify-content:center;width:7.600px">4</i><i style="font-style:normal;display:inline-flex;justify-content:center;width:7.600px">0</i><i style="font-style:normal;display:inline-flex;justify-content:center;width:7.600px">6</i><i style="font-style:normal;display:inline-flex;justify-content:center;width:7.600px">.</i><i style="font-style:normal;display:inline-flex;justify-content:center;width:7.600px">0</i><i style="font-style:normal;display:inline-flex;justify-content:center;width:7.600px">,</i><i style="font-style:normal;display:inline-flex;justify-content:center;width:7.600px">&nbsp;</i><i style="font-style:normal;display:inline-flex;justify-content:center;width:7.600px">&nbsp;</i><i style="font-style:normal;display:inline-flex;justify-content:center;width:7.600px">3</i><i style="font-style:normal;display:inline-flex;justify-content:center;width:7.600px">6</i><i style="font-style:normal;display:inline-flex;justify-content:center;width:7.600px">1</i><i style="font-style:normal;display:inline-flex;justify-content:center;width:7.600px">.</i><i style="font-style:normal;display:inline-flex;justify-content:center;width:7.600px">3</i><i style="font-style:normal;display:inline-flex;justify-content:center;width:7.600px">&nbsp;</i><i style="font-style:normal;display:inline-flex;justify-content:center;width:7.600px">,</i><i style="font-style:normal;display:inline-flex;justify-content:center;width:7.600px">&nbsp;</i><i style="font-style:normal;display:inline-flex;justify-content:center;width:7.600px">&nbsp;</i><i style="font-style:normal;display:inline-flex;justify-content:center;width:7.600px">0</i><i style="font-style:normal;display:inline-flex;justify-content:center;width:7.600px">.</i><i style="font-style:normal;display:inline-flex;justify-content:center;width:7.600px">0</i></div>
<div class="a" style="left:0;top:1002px;width:200px;height:7px;overflow:hidden"><div class="t serif" style="left:15px;top:-9px;font-size:15px;line-height:16px;color:#111;letter-spacing:.5px">Visual LISP 控制台窗口</div></div>
<div class="a" style="left:212px;top:981px;width:22px;height:20px;background:linear-gradient(#cfcfcf 0,#cfcfcf 9px,#b4b4b4 9px,#b4b4b4 100%);border-right:1px solid #8a8a8a"></div>
<div class="a" style="left:234px;top:981px;width:22px;height:20px;background:linear-gradient(#cfcfcf 0,#cfcfcf 9px,#b4b4b4 9px,#b4b4b4 100%);border-right:1px solid #8a8a8a"></div>
<div class="a" style="left:256px;top:981px;width:22px;height:20px;background:linear-gradient(#c4e8e8 0,#c4e8e8 4px,#9fd0d0 4px,#9fd0d0 100%);border-right:1px solid #8a8a8a"></div>
<div class="a" style="left:278px;top:981px;width:22px;height:20px;background:linear-gradient(#cfcfcf 0,#cfcfcf 9px,#b4b4b4 9px,#b4b4b4 100%);border-right:1px solid #8a8a8a"></div>
<div class="a" style="left:300px;top:981px;width:22px;height:20px;background:linear-gradient(#cfcfcf 0,#cfcfcf 9px,#b4b4b4 9px,#b4b4b4 100%);border-right:1px solid #8a8a8a"></div>
<div class="a" style="left:322px;top:981px;width:22px;height:20px;background:linear-gradient(#c4e8e8 0,#c4e8e8 4px,#9fd0d0 4px,#9fd0d0 100%);border-right:1px solid #8a8a8a"></div>
<div class="a" style="left:344px;top:981px;width:22px;height:20px;background:linear-gradient(#cfcfcf 0,#cfcfcf 9px,#b4b4b4 9px,#b4b4b4 100%);border-right:1px solid #8a8a8a"></div>
<div class="a" style="left:366px;top:981px;width:22px;height:20px;background:linear-gradient(#cfcfcf 0,#cfcfcf 9px,#b4b4b4 9px,#b4b4b4 100%);border-right:1px solid #8a8a8a"></div>
<div class="a" style="left:388px;top:981px;width:22px;height:20px;background:linear-gradient(#cfcfcf 0,#cfcfcf 9px,#b4b4b4 9px,#b4b4b4 100%);border-right:1px solid #8a8a8a"></div>
<div class="a" style="left:410px;top:981px;width:22px;height:20px;background:linear-gradient(#c4e8e8 0,#c4e8e8 4px,#9fd0d0 4px,#9fd0d0 100%);border-right:1px solid #8a8a8a"></div>
<div class="a" style="left:432px;top:981px;width:22px;height:20px;background:linear-gradient(#cfcfcf 0,#cfcfcf 9px,#b4b4b4 9px,#b4b4b4 100%);border-right:1px solid #8a8a8a"></div>
<div class="a" style="left:454px;top:981px;width:22px;height:20px;background:linear-gradient(#cfcfcf 0,#cfcfcf 9px,#b4b4b4 9px,#b4b4b4 100%);border-right:1px solid #8a8a8a"></div>
<div class="a" style="left:476px;top:981px;width:22px;height:20px;background:linear-gradient(#cfcfcf 0,#cfcfcf 9px,#b4b4b4 9px,#b4b4b4 100%);border-right:1px solid #8a8a8a"></div>
<div class="a" style="left:498px;top:981px;width:22px;height:20px;background:linear-gradient(#cfcfcf 0,#cfcfcf 9px,#b4b4b4 9px,#b4b4b4 100%);border-right:1px solid #8a8a8a"></div>
<div class="a" style="left:520px;top:981px;width:22px;height:20px;background:linear-gradient(#cfcfcf 0,#cfcfcf 9px,#b4b4b4 9px,#b4b4b4 100%);border-right:1px solid #8a8a8a"></div>
<div class="a" style="left:212px;top:990px;width:330px;height:1px;background:#a8a8e0;opacity:.7"></div>
<svg style="left:214px;top:982px" width="18" height="18" viewBox="0 0 18 18" ><path d="M2 7h12M8 1v13" stroke="#222" stroke-width="1.100"/><rect x="6" y="5" width="4" height="4" fill="none" stroke="#222"/><rect x="13.500" y="9.500" width="3" height="3" fill="#fff" stroke="#2a6ad0"/><rect x="10.500" y="13.500" width="3" height="3" fill="#fff" stroke="#d04010"/><path d="M15 12.500v2.500h-1.500" stroke="#d04010" fill="none"/></svg>
<svg style="left:236px;top:982px" width="18" height="18" viewBox="0 0 18 18" ><g stroke="#222" stroke-width="1" stroke-dasharray="1 1.500"><path d="M3 3.500h8M3 6h8M3 8.500h8M3 11h8"/></g><path d="M3 13.500h11M13.500 4v9" stroke="#222" stroke-width="1.200" stroke-dasharray="3 1"/></svg>
<svg style="left:258px;top:982px" width="18" height="18" viewBox="0 0 18 18" ><rect x="1.500" y="1.500" width="15" height="15" rx="1" fill="#fff" stroke="#33335e" stroke-width="1.300"/><path d="M1.500 5.200h15M1.500 9h15M1.500 12.800h15M5.200 1.500v15M9 1.500v15M12.800 1.500v15" stroke="#33335e" stroke-width="1.300"/></svg>
<svg style="left:280px;top:982px" width="18" height="18" viewBox="0 0 18 18" ><path d="M2.500 1v14.500h14" fill="none" stroke="#444" stroke-width="1.200"/><path d="M2.500 10h5.500v5.500" fill="none" stroke="#555"/></svg>
<svg style="left:302px;top:982px" width="18" height="18" viewBox="0 0 18 18" ><path d="M3 13a5.500 5.500 0 1110.500-3" fill="none" stroke="#777" stroke-width="1.200"/><path d="M5 12.500h11M7 12.500l8-9" stroke="#222" stroke-width="1.200"/><path d="M10 8.500l3 1v3" fill="none" stroke="#222"/></svg>
<svg style="left:324px;top:982px" width="18" height="18" viewBox="0 0 18 18" ><rect x="3.500" y="3.500" width="12" height="12" rx="1" fill="#fff" stroke="#33335e" stroke-width="1.300"/><rect x="4.500" y="4.500" width="10" height="4" fill="#c8c8f0"/><circle cx="3" cy="3" r="1.800" fill="#fff" stroke="#f05010" stroke-width="1.100"/></svg>
<svg style="left:346px;top:982px" width="18" height="18" viewBox="0 0 18 18" ><path d="M3.500 5.500l3-3h9.500v9l-3 3h-9.500z" fill="#ddd" stroke="#444"/><rect x="3.500" y="5.500" width="9.500" height="9" fill="#c8c8f0" stroke="#444"/><circle cx="3.500" cy="14.500" r="2" fill="#fff" stroke="#f05010" stroke-width="1.200"/></svg>
<svg style="left:368px;top:982px" width="18" height="18" viewBox="0 0 18 18" ><path d="M3 13.500h11M5 13.500l8-9" stroke="#222" stroke-width="1.200"/><path d="M8.500 8l2.500 1.500" stroke="#222"/></svg>
<svg style="left:390px;top:982px" width="18" height="18" viewBox="0 0 18 18" ><path d="M2.500 1v14.500h13M2.500 15.500l9-9" fill="none" stroke="#33335e" stroke-width="1.200"/><path d="M1 3l1.500-2.500 1.500 2.500M14 14l2.500 1.500-2.500 1.500" fill="none" stroke="#33335e"/><path d="M13 .5l-3 4.500h2.500l-2 3.500 5-5h-2.500l2-3z" fill="#f7a020"/></svg>
<svg style="left:412px;top:982px" width="18" height="18" viewBox="0 0 18 18" ><path d="M2 7h8M6 3v8" stroke="#222" stroke-width="1.500"/><rect x="9.500" y="8.500" width="5" height="3" fill="#fff" stroke="#222"/></svg>
<svg style="left:434px;top:982px" width="18" height="18" viewBox="0 0 18 18" ><path d="M2 8h13M8.500 2v13" stroke="#111" stroke-width="1.800"/></svg>
<svg style="left:456px;top:982px" width="18" height="18" viewBox="0 0 18 18" ><defs><pattern id="ck" width="2" height="2" patternUnits="userSpaceOnUse"><rect width="1" height="1" fill="#fff"/><rect x="1" y="1" width="1" height="1" fill="#fff"/></pattern></defs><rect x="1" y="1" width="16" height="16" fill="#4a8ae8" stroke="#1a5ac0" stroke-width="1.300"/><rect x="2" y="2" width="14" height="14" fill="url(#ck)" opacity=".55"/></svg>
<svg style="left:478px;top:982px" width="18" height="18" viewBox="0 0 18 18" ><rect x="5.500" y="4.500" width="7" height="9" fill="#fff" stroke="#222"/><path d="M7 7h4M7 9h4M7 11h4" stroke="#222" stroke-dasharray="1 .5"/></svg>
<svg style="left:500px;top:982px" width="18" height="18" viewBox="0 0 18 18" ><path d="M1 4h5M3.500 1.500v5" stroke="#222" stroke-width="1.100"/><rect x="5.500" y="5.500" width="7" height="7" fill="#fff" stroke="#222"/><rect x="8.500" y="8.500" width="7.500" height="7.500" rx="1.500" fill="#8ac858" stroke="#3a7a18"/></svg>
<svg style="left:522px;top:982px" width="18" height="18" viewBox="0 0 18 18" ><path d="M6.500 1.500h5v5h5v5h-5v5h-5v-5h-5v-5h5z" fill="#fff" stroke="#111" stroke-width="1.300"/><path d="M2.500 9h13" stroke="#c8c8f0" stroke-width="1.500"/></svg>

<style>
#dlg{left:116px;top:146px;width:800px;height:628px;background:#fff;border:1px solid #e0a040}
.gb{position:absolute;border:1px solid #dcdcdc}
.fld{position:absolute;height:22px;width:113px;border:1px solid #6e6e6e;background:#fff}
.fv{position:absolute;left:1px;top:1px;font-family:"Liberation Serif",serif;font-size:15px;line-height:16px;white-space:nowrap;color:#000}
.lb{position:absolute;white-space:nowrap;font-family:"Liberation Sans",sans-serif;font-size:15px;line-height:16px;color:#000}
.lb i,.fv i{font-style:normal;display:inline-flex;justify-content:center;width:7.5px;font-family:"Liberation Serif",serif;font-size:15px}
.btn{position:absolute;width:66px;height:24px;top:740px;background:#cdcdcd;border:1px solid #a6a6a6;text-align:center;font-family:"Liberation Serif",serif;font-size:15px;line-height:22px;letter-spacing:0}
</style>
<div id="dlg" class="a"></div>
<div class="t" style="left:121px;top:154px;font-size:15px;line-height:17px">钢格栅板，参考《YB/T 4001.1-2007》</div>
<svg style="left:888px;top:156px" width="12" height="12" viewBox="0 0 12 12" ><path d="M0.500 0.500l11 11M11.500 0.500l-11 11" stroke="#000" stroke-width="1.100"/></svg>
<div class="gb" style="left:125px;top:188px;width:782px;height:483px"></div>
<div class="gb" style="left:134px;top:211px;width:276px;height:455px"></div>
<div class="gb" style="left:143px;top:234px;width:258px;height:71px"></div>
<div class="a" style="left:150px;top:226px;width:94px;height:16px;background:#fff"></div>
<div class="lb" style="left:153px;top:226px">钢格栅板尺寸</div>
<div class="lb" style="left:153px;top:256px">承载宽度<i style="transform:scaleX(0.52)">W</i></div>
<div class="lb" style="left:153px;top:284px">长度<i style="transform:scaleX(0.78)">L</i></div>
<div class="fld" style="left:280px;top:253px;width:112px"><span class="fv"><i>8</i><i>0</i><i>0</i></span></div>
<div class="fld" style="left:280px;top:281px;width:112px"><span class="fv"><i>1</i><i>2</i><i>0</i><i>0</i></span></div>
<div class="lb" style="left:144px;top:329px">承载扁钢厚度<i>t</i><i>1</i><i>:</i></div>
<div class="fld" style="left:289px;top:326px;width:112px"><span class="fv"><i>1</i><i>0</i></span></div>
<div class="lb" style="left:144px;top:357px">承载扁钢宽度<i>b</i><i>1</i><i>:</i></div>
<div class="fld" style="left:289px;top:354px;width:112px"><span class="fv"><i>6</i><i>0</i></span></div>
<div class="lb" style="left:144px;top:385px">承载扁钢间距<i>d</i><i>1</i><i>:</i></div>
<div class="fld" style="left:289px;top:382px;width:112px"><span class="fv"><i>3</i><i>5</i></span></div>
<div class="lb" style="left:144px;top:425px">横杆扁钢厚度<i>t</i><i>2</i><i>:</i></div>
<div class="fld" style="left:289px;top:422px;width:112px"><span class="fv"><i>5</i></span></div>
<div class="lb" style="left:144px;top:453px">横杆扁钢宽度<i>b</i><i>2</i><i>:</i></div>
<div class="fld" style="left:289px;top:450px;width:112px"><span class="fv"><i>2</i><i>5</i></span></div>
<div class="lb" style="left:144px;top:481px">横杆扁钢间距<i>d</i><i>2</i><i>:</i></div>
<div class="fld" style="left:289px;top:478px;width:112px"><span class="fv"><i>8</i><i>0</i></span></div>
<div class="lb" style="left:144px;top:521px">包边扁钢厚度<i>t</i><i>3</i><i>:</i></div>
<div class="fld" style="left:289px;top:518px;width:112px"><span class="fv"><i>1</i><i>0</i></span></div>
<div class="lb" style="left:144px;top:549px">包边扁钢宽度<i>b</i><i>3</i><i>:</i></div>
<div class="fld" style="left:289px;top:546px;width:112px"><span class="fv"><i>6</i><i>0</i></span></div>
<div class="lb" style="left:144px;top:589px">材料<i>:</i></div>
<div class="fld" style="left:289px;top:586px;width:112px"><span class="fv"><i style="transform:scaleX(0.68)">Q</i><i>2</i><i>3</i><i>5</i><i style="transform:scaleX(0.72)">B</i></span></div>
<div class="lb" style="left:144px;top:617px">密度<i>:</i></div>
<div class="fld" style="left:289px;top:614px;width:112px"><span class="fv"><i>7</i><i>.</i><i>9</i></span></div>
<div class="lb" style="left:144px;top:645px">增重系数<i>:</i></div>
<div class="fld" style="left:289px;top:642px;width:112px"><span class="fv"><i>1</i></span></div>
<div class="a" style="left:418px;top:204px;width:480px;height:462px;background:#333"></div>
<svg style="left:418px;top:204px" width="480" height="462" viewBox="418 204 480 462"><path d="M479 225.5H710M479 571.5H710M479.5 225V572M709.5 225V572M484.5 225V572M703.5 225V572M484 232.5H704M484 565.5H704M484 243.5H528M530 243.5H575M577 243.5H621M622 243.5H667M668 243.5H704M484 263.5H528M530 263.5H575M577 263.5H621M622 263.5H667M668 263.5H704M484 283.5H528M530 283.5H575M577 283.5H621M622 283.5H667M668 283.5H704M484 303.5H528M530 303.5H575M577 303.5H621M622 303.5H667M668 303.5H704M484 323.5H528M530 323.5H575M577 323.5H621M622 323.5H667M668 323.5H704M484 344.5H528M530 344.5H575M577 344.5H621M622 344.5H667M668 344.5H704M484 364.5H528M530 364.5H575M577 364.5H621M622 364.5H667M668 364.5H704M484 384.5H528M530 384.5H575M577 384.5H621M622 384.5H667M668 384.5H704M484 404.5H528M530 404.5H575M577 404.5H621M622 404.5H667M668 404.5H704M484 424.5H528M530 424.5H575M577 424.5H621M622 424.5H667M668 424.5H704M484 445.5H528M530 445.5H575M577 445.5H621M622 445.5H667M668 445.5H704M484 464.5H528M530 464.5H575M577 464.5H621M622 464.5H667M668 464.5H704M484 485.5H528M530 485.5H575M577 485.5H621M622 485.5H667M668 485.5H704M484 505.5H528M530 505.5H575M577 505.5H621M622 505.5H667M668 505.5H704M484 525.5H528M530 525.5H575M577 525.5H621M622 525.5H667M668 525.5H704M484 545.5H528M530 545.5H575M577 545.5H621M622 545.5H667M668 545.5H704M484 248.5H528M530 248.5H575M577 248.5H621M622 248.5H667M668 248.5H704M484 268.5H528M530 268.5H575M577 268.5H621M622 268.5H667M668 268.5H704M484 288.5H528M530 288.5H575M577 288.5H621M622 288.5H667M668 288.5H704M484 308.5H528M530 308.5H575M577 308.5H621M622 308.5H667M668 308.5H704M484 328.5H528M530 328.5H575M577 328.5H621M622 328.5H667M668 328.5H704M484 348.5H528M530 348.5H575M577 348.5H621M622 348.5H667M668 348.5H704M484 369.5H528M530 369.5H575M577 369.5H621M622 369.5H667M668 369.5H704M484 389.5H528M530 389.5H575M577 389.5H621M622 389.5H667M668 389.5H704M484 409.5H528M530 409.5H575M577 409.5H621M622 409.5H667M668 409.5H704M484 429.5H528M530 429.5H575M577 429.5H621M622 429.5H667M668 429.5H704M484 449.5H528M530 449.5H575M577 449.5H621M622 449.5H667M668 449.5H704M484 469.5H528M530 469.5H575M577 469.5H621M622 469.5H667M668 469.5H704M484 489.5H528M530 489.5H575M577 489.5H621M622 489.5H667M668 489.5H704M484 509.5H528M530 509.5H575M577 509.5H621M622 509.5H667M668 509.5H704M484 530.5H528M530 530.5H575M577 530.5H621M622 530.5H667M668 530.5H704M484 550.5H528M530 550.5H575M577 550.5H621M622 550.5H667M668 550.5H704M527.5 232V566M574.5 232V566M620.5 232V566M666.5 232V566M530.5 232V566M577.5 232V566M622.5 232V566M668.5 232V566" stroke="#00ff00" stroke-width="1" fill="none" shape-rendering="crispEdges"/><path d="M598.0 324.5C601.1 324.4 606.0 324.4 610.0 324.5C614.0 324.6 618.7 324.6 622.0 324.8C625.3 325.1 627.3 325.2 630.0 326.0C632.7 326.8 635.2 328.0 638.0 329.3C640.8 330.6 644.3 332.3 647.0 334.0C649.7 335.7 652.0 337.6 654.0 339.3C656.0 341.0 657.3 342.3 659.0 344.3C660.7 346.3 662.5 348.8 664.0 351.3C665.5 353.8 666.8 356.5 668.0 359.3C669.2 362.1 670.1 365.3 671.0 368.3C671.9 371.3 672.9 373.9 673.5 377.3C674.1 380.8 674.5 385.1 674.7 389.0C675.0 392.9 675.0 397.5 675.0 401.0C675.0 404.5 674.7 407.3 674.5 410.0C674.3 412.7 674.2 414.5 673.8 417.0C673.4 419.5 672.7 422.2 672.0 425.0C671.3 427.8 670.6 430.8 669.5 434.0C668.4 437.2 667.0 440.8 665.5 444.0C664.0 447.2 662.3 449.8 660.5 453.0C658.7 456.2 656.7 460.0 654.5 463.0C652.3 466.0 649.8 468.5 647.5 471.0C645.2 473.5 643.3 475.6 640.5 478.0C637.7 480.4 633.7 483.2 630.5 485.3C627.3 487.4 624.8 488.6 621.5 490.3C618.2 492.0 614.9 493.6 610.5 495.3C606.1 497.1 600.4 499.4 595.0 500.8C589.6 502.2 583.0 503.3 578.0 503.8C573.0 504.3 568.2 504.1 565.0 504.0C561.8 503.9 561.8 503.8 559.0 503.4C556.2 503.0 551.5 502.8 548.0 501.8C544.5 500.8 541.2 499.0 538.0 497.3C534.8 495.6 531.7 493.5 529.0 491.4C526.3 489.2 524.2 487.1 522.0 484.4C519.8 481.7 517.7 478.4 516.0 475.4C514.3 472.4 513.2 469.4 512.0 466.4C510.8 463.4 509.9 460.2 509.0 457.4C508.1 454.6 507.2 452.3 506.6 449.4C506.0 446.5 505.5 443.2 505.2 440.0C504.9 436.8 504.9 433.3 504.8 430.0C504.7 426.7 504.7 423.3 504.8 420.0C504.9 416.7 505.1 412.5 505.3 410.0C505.6 407.5 505.9 407.2 506.3 405.0C506.7 402.8 507.1 399.7 507.8 397.0C508.5 394.3 509.2 391.7 510.3 389.0C511.4 386.3 512.8 383.7 514.3 381.0C515.8 378.3 517.5 375.8 519.3 373.0C521.1 370.2 523.1 366.8 525.3 364.0C527.5 361.2 529.8 358.5 532.3 356.0C534.8 353.5 537.3 351.6 540.3 349.2C543.3 346.8 546.8 343.9 550.3 341.8C553.8 339.7 557.6 338.0 561.3 336.3C565.0 334.6 568.8 333.2 572.3 331.8C575.8 330.4 579.1 328.9 582.3 327.8C585.5 326.7 588.7 325.9 591.3 325.3C593.9 324.8 594.9 324.6 598.0 324.5Z" fill="#333" stroke="#00ffff" stroke-width="1" shape-rendering="crispEdges"/><path d="M566 448.500L520.500 428.500M658 428.500L612.500 407.500" fill="none" stroke="#ff00ff" stroke-width="2" stroke-linejoin="miter"/><path d="M520.500 428.500H658" stroke="#ff00ff" stroke-width="3" shape-rendering="crispEdges"/><path d="M522 428.500H555M623 428.500H656" stroke="#00ffff" stroke-width="1" shape-rendering="crispEdges"/><path d="M711 225.5H789M711 571.5H789M779.5 225V572M738.5 286V384M689 344.5H748M689 348.5H748M739.5 403V520M706 464.5H749M706 485.5H749M418 416.5H520M479.5 407V421M484.5 407V421M450 602.5H566M484.5 566V612M530.5 568V612M585 602.5H684M620.5 558V612M622.5 558V612M479 644.5H710M479.5 574V654M709.5 574V654" stroke="#00ffff" stroke-width="1" fill="none" shape-rendering="crispEdges"/><g stroke="#00ffff" stroke-width="1" fill="none" shape-rendering="crispEdges"><path transform="translate(779.5 225.5) rotate(90)" d="M18 -3.500V3.500M18.500 -3H14.500M15.500 -2H6.500M7.500 -1H3.500M18.500 3H14.500M15.500 2H6.500M7.500 1H3.500"/><path transform="translate(779.5 571.5) rotate(270)" d="M18 -3.500V3.500M18.500 -3H14.500M15.500 -2H6.500M7.500 -1H3.500M18.500 3H14.500M15.500 2H6.500M7.500 1H3.500"/><path transform="translate(738.5 344.5) rotate(270)" d="M18 -3.500V3.500M18.500 -3H14.500M15.500 -2H6.500M7.500 -1H3.500M18.500 3H14.500M15.500 2H6.500M7.500 1H3.500"/><path transform="translate(738.5 348.5) rotate(90)" d="M18 -3.500V3.500M18.500 -3H14.500M15.500 -2H6.500M7.500 -1H3.500M18.500 3H14.500M15.500 2H6.500M7.500 1H3.500"/><path transform="translate(739.5 464.5) rotate(270)" d="M18 -3.500V3.500M18.500 -3H14.500M15.500 -2H6.500M7.500 -1H3.500M18.500 3H14.500M15.500 2H6.500M7.500 1H3.500"/><path transform="translate(739.5 485.5) rotate(90)" d="M18 -3.500V3.500M18.500 -3H14.500M15.500 -2H6.500M7.500 -1H3.500M18.500 3H14.500M15.500 2H6.500M7.500 1H3.500"/><path transform="translate(479.5 416.5) rotate(180)" d="M18 -3.500V3.500M18.500 -3H14.500M15.500 -2H6.500M7.500 -1H3.500M18.500 3H14.500M15.500 2H6.500M7.500 1H3.500"/><path transform="translate(484.5 416.5) rotate(0)" d="M18 -3.500V3.500M18.500 -3H14.500M15.500 -2H6.500M7.500 -1H3.500M18.500 3H14.500M15.500 2H6.500M7.500 1H3.500"/><path transform="translate(484.5 602.5) rotate(180)" d="M18 -3.500V3.500M18.500 -3H14.500M15.500 -2H6.500M7.500 -1H3.500M18.500 3H14.500M15.500 2H6.500M7.500 1H3.500"/><path transform="translate(530.5 602.5) rotate(0)" d="M18 -3.500V3.500M18.500 -3H14.500M15.500 -2H6.500M7.500 -1H3.500M18.500 3H14.500M15.500 2H6.500M7.500 1H3.500"/><path transform="translate(620.5 602.5) rotate(180)" d="M18 -3.500V3.500M18.500 -3H14.500M15.500 -2H6.500M7.500 -1H3.500M18.500 3H14.500M15.500 2H6.500M7.500 1H3.500"/><path transform="translate(622.5 602.5) rotate(0)" d="M18 -3.500V3.500M18.500 -3H14.500M15.500 -2H6.500M7.500 -1H3.500M18.500 3H14.500M15.500 2H6.500M7.500 1H3.500"/><path transform="translate(479.5 644.5) rotate(0)" d="M18 -3.500V3.500M18.500 -3H14.500M15.500 -2H6.500M7.500 -1H3.500M18.500 3H14.500M15.500 2H6.500M7.500 1H3.500"/><path transform="translate(709.5 644.5) rotate(180)" d="M18 -3.500V3.500M18.500 -3H14.500M15.500 -2H6.500M7.500 -1H3.500M18.500 3H14.500M15.500 2H6.500M7.500 1H3.500"/></g><g transform="translate(423 392.5) rotate(0) scale(1)" stroke="#00ffff" stroke-width="1" fill="none" shape-rendering="crispEdges"><path transform="translate(0.0 0)" d="M2.500 0V13.500Q2.500 16 5 16H6M0 5.500H6"/><path transform="translate(8.5 0)" d="M0.500 0H7.500L3.500 6Q8 6 8 11Q8 16 4 16Q1 16 0 13.500"/></g><g transform="translate(498 579.5) rotate(0) scale(1)" stroke="#00ffff" stroke-width="1" fill="none" shape-rendering="crispEdges"><path transform="translate(0.0 0)" d="M7 0V16M7 8.500Q7 5.500 3.500 5.500Q0 5.500 0 10.750Q0 16 3.500 16Q7 16 7 13"/><path transform="translate(10.5 0)" d="M0.500 3.500Q0.500 0 4 0Q7.500 0 7.500 3.500Q7.500 6 4 10L0 16H8"/></g><g transform="translate(663 579) rotate(0) scale(1)" stroke="#00ffff" stroke-width="1" fill="none" shape-rendering="crispEdges"><path transform="translate(0.0 0)" d="M2.500 0V13.500Q2.500 16 5 16H6M0 5.500H6"/><path transform="translate(8.5 0)" d="M0.500 3.500Q0.500 0 4 0Q7.500 0 7.500 3.500Q7.500 6 4 10L0 16H8"/></g><g transform="translate(588 621.5) rotate(0) scale(1)" stroke="#00ffff" stroke-width="1" fill="none" shape-rendering="crispEdges"><path transform="translate(0.0 0)" d="M0 0L3 16L6 0L9 16L12 0"/></g><g transform="translate(714.5 305) rotate(-90) scale(1)" stroke="#00ffff" stroke-width="1" fill="none" shape-rendering="crispEdges"><path transform="translate(0.0 0)" d="M2.500 0V13.500Q2.500 16 5 16H6M0 5.500H6"/><path transform="translate(9.5 0)" d="M1.500 2.500L4 0V16"/></g><g transform="translate(716.5 426) rotate(-90) scale(1)" stroke="#00ffff" stroke-width="1" fill="none" shape-rendering="crispEdges"><path transform="translate(0.0 0)" d="M7 0V16M7 8.500Q7 5.500 3.500 5.500Q0 5.500 0 10.750Q0 16 3.500 16Q7 16 7 13"/><path transform="translate(12.5 0)" d="M1.500 2.500L4 0V16"/></g><g transform="translate(755.5 403.5) rotate(-90) scale(1)" stroke="#00ffff" stroke-width="1" fill="none" shape-rendering="crispEdges"><path transform="translate(0.0 0)" d="M0 0V16H8"/></g></svg>
<div class="lb" style="left:122px;top:680px">注：表面增重系数，热浸锌增重按<i>1</i><i>.</i><i>0</i><i>6</i>计算。</div>
<div class="fld" style="left:363px;top:701px;width:544px;height:22px;border-color:#707070"></div>
<div class="btn" style="left:407px;background:#ccffff;border-color:#0a6cd8">计算</div>
<div class="a" style="left:409.5px;top:742.5px;width:61px;height:19px;border:1px dotted #000"></div>
<div class="btn" style="left:483px">确定</div>
<div class="btn" style="left:559px">取消</div>
<svg style="left:431px;top:757px" width="18" height="28" viewBox="0 0 14 22"><path d="M1 1v16l3.800-3.600 2.800 6.500 2.600-1.100-2.800-6.300h5.200z" fill="#fff" stroke="#000" stroke-width=".9" stroke-linejoin="miter"/></svg>

<div id="redge" class="a"></div>
</body>
</html>
